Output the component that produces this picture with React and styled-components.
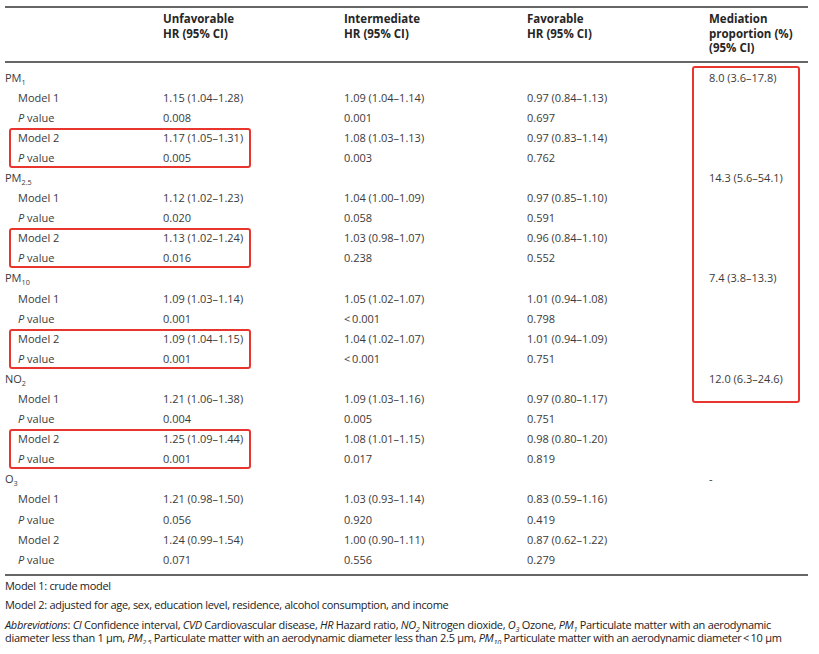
import React from "react";
import styled, { createGlobalStyle } from "styled-components";

const Global = createGlobalStyle`
  html, body { margin: 0; padding: 0; background: #fff; }
  body { font-family: "Open Sans", "Noto Sans", sans-serif; color: #3a3a3a; }
`;

const Page = styled.div`
  width: 803px;
  padding: 6px 11px 0 5px;
`;

const COLS = "158px 181px 183px 182px 1fr";

const Header = styled.div`
  display: grid;
  grid-template-columns: ${COLS};
  border-top: 2px solid #666;
  border-bottom: 2px solid #666;
  padding: 4px 0 5px;
`;

const HeadCell = styled.div`
  font-weight: 700;
  font-size: 11.5px;
  line-height: 14.5px;
  color: #262626;
  height: 43.5px;
`;

const Body = styled.div`
  display: grid;
  grid-template-columns: ${COLS};
  grid-template-rows: repeat(25, 20.1px);
  padding: 5px 0 4px;
  border-bottom: 2px solid #666;
`;

const Cell = styled.div`
  grid-row: ${(p) => p.$r};
  grid-column: ${(p) => p.$c};
  font-size: 11px;
  line-height: 20.1px;
  white-space: nowrap;
  padding-left: ${(p) => (p.$indent ? "13px" : "0")};
`;

const Sub = styled.sub`
  font-size: 0.66em;
  line-height: 0;
  vertical-align: -0.35em;
`;

const Italic = styled.i`
  font-style: italic;
`;

const RowBox = styled.div`
  grid-row: ${(p) => p.$r} / span 2;
  grid-column: 1 / 3;
  justify-self: start;
  width: 242px;
  margin-left: 4px;
  border: 2px solid #e8362f;
  border-radius: 3px;
  box-sizing: border-box;
  pointer-events: none;
`;

const MedBox = styled.div`
  grid-row: 1 / 18;
  grid-column: 5;
  margin: -2px 8px 6px -17px;
  border: 2px solid #e8362f;
  border-radius: 3px;
  pointer-events: none;
`;

const Footer = styled.div`
  font-family: "Open Sans", "Noto Sans", sans-serif;
  font-size: 11px;
  letter-spacing: -0.3px;
  color: #222;
`;

const Note = styled.div`
  line-height: ${(p) => p.$lh}px;
  margin-top: ${(p) => p.$mt || 0}px;
`;

const groups = [
  {
    name: ["PM", "1"],
    med: "8.0 (3.6–17.8)",
    rows: [
      ["1.15 (1.04–1.28)", "1.09 (1.04–1.14)", "0.97 (0.84–1.13)"],
      ["0.008", "0.001", "0.697"],
      ["1.17 (1.05–1.31)", "1.08 (1.03–1.13)", "0.97 (0.83–1.14)"],
      ["0.005", "0.003", "0.762"],
    ],
  },
  {
    name: ["PM", "2.5"],
    med: "14.3 (5.6–54.1)",
    rows: [
      ["1.12 (1.02–1.23)", "1.04 (1.00–1.09)", "0.97 (0.85–1.10)"],
      ["0.020", "0.058", "0.591"],
      ["1.13 (1.02–1.24)", "1.03 (0.98–1.07)", "0.96 (0.84–1.10)"],
      ["0.016", "0.238", "0.552"],
    ],
  },
  {
    name: ["PM", "10"],
    med: "7.4 (3.8–13.3)",
    rows: [
      ["1.09 (1.03–1.14)", "1.05 (1.02–1.07)", "1.01 (0.94–1.08)"],
      ["0.001", "<\u20090.001", "0.798"],
      ["1.09 (1.04–1.15)", "1.04 (1.02–1.07)", "1.01 (0.94–1.09)"],
      ["0.001", "<\u20090.001", "0.751"],
    ],
  },
  {
    name: ["NO", "2"],
    med: "12.0 (6.3–24.6)",
    rows: [
      ["1.21 (1.06–1.38)", "1.09 (1.03–1.16)", "0.97 (0.80–1.17)"],
      ["0.004", "0.005", "0.751"],
      ["1.25 (1.09–1.44)", "1.08 (1.01–1.15)", "0.98 (0.80–1.20)"],
      ["0.001", "0.017", "0.819"],
    ],
  },
  {
    name: ["O", "3"],
    med: "-",
    rows: [
      ["1.21 (0.98–1.50)", "1.03 (0.93–1.14)", "0.83 (0.59–1.16)"],
      ["0.056", "0.920", "0.419"],
      ["1.24 (0.99–1.54)", "1.00 (0.90–1.11)", "0.87 (0.62–1.22)"],
      ["0.071", "0.556", "0.279"],
    ],
  },
];

const labels = [
  "Model 1",
  <><Italic>P</Italic> value</>,
  "Model 2",
  <><Italic>P</Italic> value</>,
];

export default function App() {
  const cells = [];
  groups.forEach((g, gi) => {
    const base = gi * 5 + 1;
    cells.push(
      <Cell key={`n${gi}`} $r={base} $c={1}>
        {g.name[0]}
        <Sub>{g.name[1]}</Sub>
      </Cell>
    );
    cells.push(
      <Cell key={`m${gi}`} $r={base} $c={5}>
        {g.med}
      </Cell>
    );
    g.rows.forEach((row, ri) => {
      const r = base + ri + 1;
      cells.push(
        <Cell key={`l${gi}-${ri}`} $r={r} $c={1} $indent>
          {labels[ri]}
        </Cell>
      );
      row.forEach((v, ci) => {
        cells.push(
          <Cell key={`v${gi}-${ri}-${ci}`} $r={r} $c={ci + 2}>
            {v}
          </Cell>
        );
      });
    });
    if (gi < 4) cells.push(<RowBox key={`b${gi}`} $r={base + 3} />);
  });

  return (
    <>
      <Global />
      <Page>
        <Header>
          <HeadCell />
          <HeadCell>
            Unfavorable
            <br />
            HR (95% CI)
          </HeadCell>
          <HeadCell>
            Intermediate
            <br />
            HR (95% CI)
          </HeadCell>
          <HeadCell>
            Favorable
            <br />
            HR (95% CI)
          </HeadCell>
          <HeadCell>
            Mediation
            <br />
            proportion (%)
            <br />
            (95% CI)
          </HeadCell>
        </Header>
        <Body>
          {cells}
          <MedBox />
        </Body>
        <Footer>
          <Note $lh={19}>Model 1: crude model</Note>
          <Note $lh={20}>
            Model 2: adjusted for age, sex, education level, residence, alcohol
            consumption, and income
          </Note>
          <Note $lh={13} $mt={3.5}>
            <Italic>Abbreviations</Italic>: <Italic>CI</Italic> Confidence
            interval, <Italic>CVD</Italic> Cardiovascular disease,{" "}
            <Italic>HR</Italic> Hazard ratio,{" "}
            <Italic>
              NO<Sub>2</Sub>
            </Italic>{" "}
            Nitrogen dioxide,{" "}
            <Italic>
              O<Sub>3</Sub>
            </Italic>{" "}
            Ozone,{" "}
            <Italic>
              PM<Sub>1</Sub>
            </Italic>{" "}
            Particulate matter with an aerodynamic diameter less than 1 μm,{" "}
            <Italic>
              PM<Sub>2.5</Sub>
            </Italic>{" "}
            Particulate matter with an aerodynamic diameter less than 2.5 μm,{" "}
            <Italic>
              PM<Sub>10</Sub>
            </Italic>{" "}
            Particulate matter with an aerodynamic diameter{"\u2009"}&lt;{"\u2009"}10 μm
          </Note>
        </Footer>
      </Page>
    </>
  );
}
